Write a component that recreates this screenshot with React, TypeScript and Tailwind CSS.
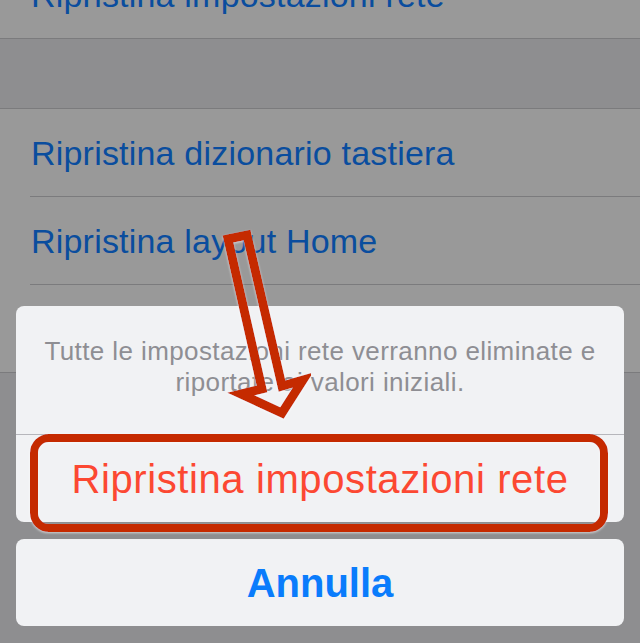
import React from "react";

const font = { fontFamily: '"Liberation Sans", Arial, sans-serif' };

function Row({ label, inset, className = "" }: { label: string; inset?: boolean; className?: string }) {
  return (
    <div className={"bg-[#999999] " + className}>
      <div className="h-[87px] flex items-center pl-[31px] text-[34px] text-[#0a4d9e] leading-none tracking-[0.2px]">
        {label}
      </div>
      <div className={"h-px bg-[#7b7b7d] " + (inset ? "ml-[30px]" : "")} />
    </div>
  );
}

export default function App() {
  return (
    <div className="relative w-[640px] h-[643px] overflow-hidden bg-[#8e8e90]" style={font}>
      {/* impostazioni sullo sfondo (oscurate) */}
      <div className="flex flex-col">
        <Row label="Ripristina impostazioni rete" className="-mt-[49px]" />
        <div className="h-[70px] border-b border-[#7b7b7d]" />
        <Row label="Ripristina dizionario tastiera" inset />
        <Row label="Ripristina layout Home" inset />
        <Row label="" />
      </div>

      {/* action sheet */}
      <div className="absolute left-[16px] right-[16px] top-[306px] flex flex-col gap-[17px]">
        <div className="rounded-[8px] bg-[#f1f2f4] overflow-hidden">
          <div className="h-[128px] flex items-center justify-center px-[20px] pb-[6px] text-center text-[26px] leading-[31px] text-[#8e8e93] tracking-[0.4px]">
            Tutte le impostazioni rete verranno eliminate e riportate ai valori iniziali.
          </div>
          <div className="h-px bg-[#b6b6bb]" />
          <div className="h-[87px] flex items-center justify-center text-[40px] text-[#fc4832] tracking-[0.6px]">
            Ripristina impostazioni rete
          </div>
        </div>
        <div className="h-[87px] rounded-[8px] bg-[#f1f2f4] flex items-center justify-center text-[40px] font-bold text-[#0a7cfc]">
          Annulla
        </div>
      </div>

      {/* annotazione rossa */}
      <svg className="absolute inset-0 pointer-events-none" width="640" height="643" viewBox="0 0 640 643">
        <defs>
          <filter id="glow" x="-10%" y="-10%" width="120%" height="120%">
            <feDropShadow dx="0" dy="1" stdDeviation="1" floodColor="#ffffff" floodOpacity="0.6" />
          </filter>
        </defs>
        <rect x="34" y="438" width="570" height="90" rx="15" fill="none" stroke="#c52c00" strokeWidth="8" filter="url(#glow)" />
        <path
          d="M228 239 L247 235 L282 386 L303 380 L282 413 L241 394 L262 389 Z"
          fill="none"
          stroke="#c52c00"
          strokeWidth="9"
          strokeLinejoin="miter"
          filter="url(#glow)"
        />
      </svg>
    </div>
  );
}
